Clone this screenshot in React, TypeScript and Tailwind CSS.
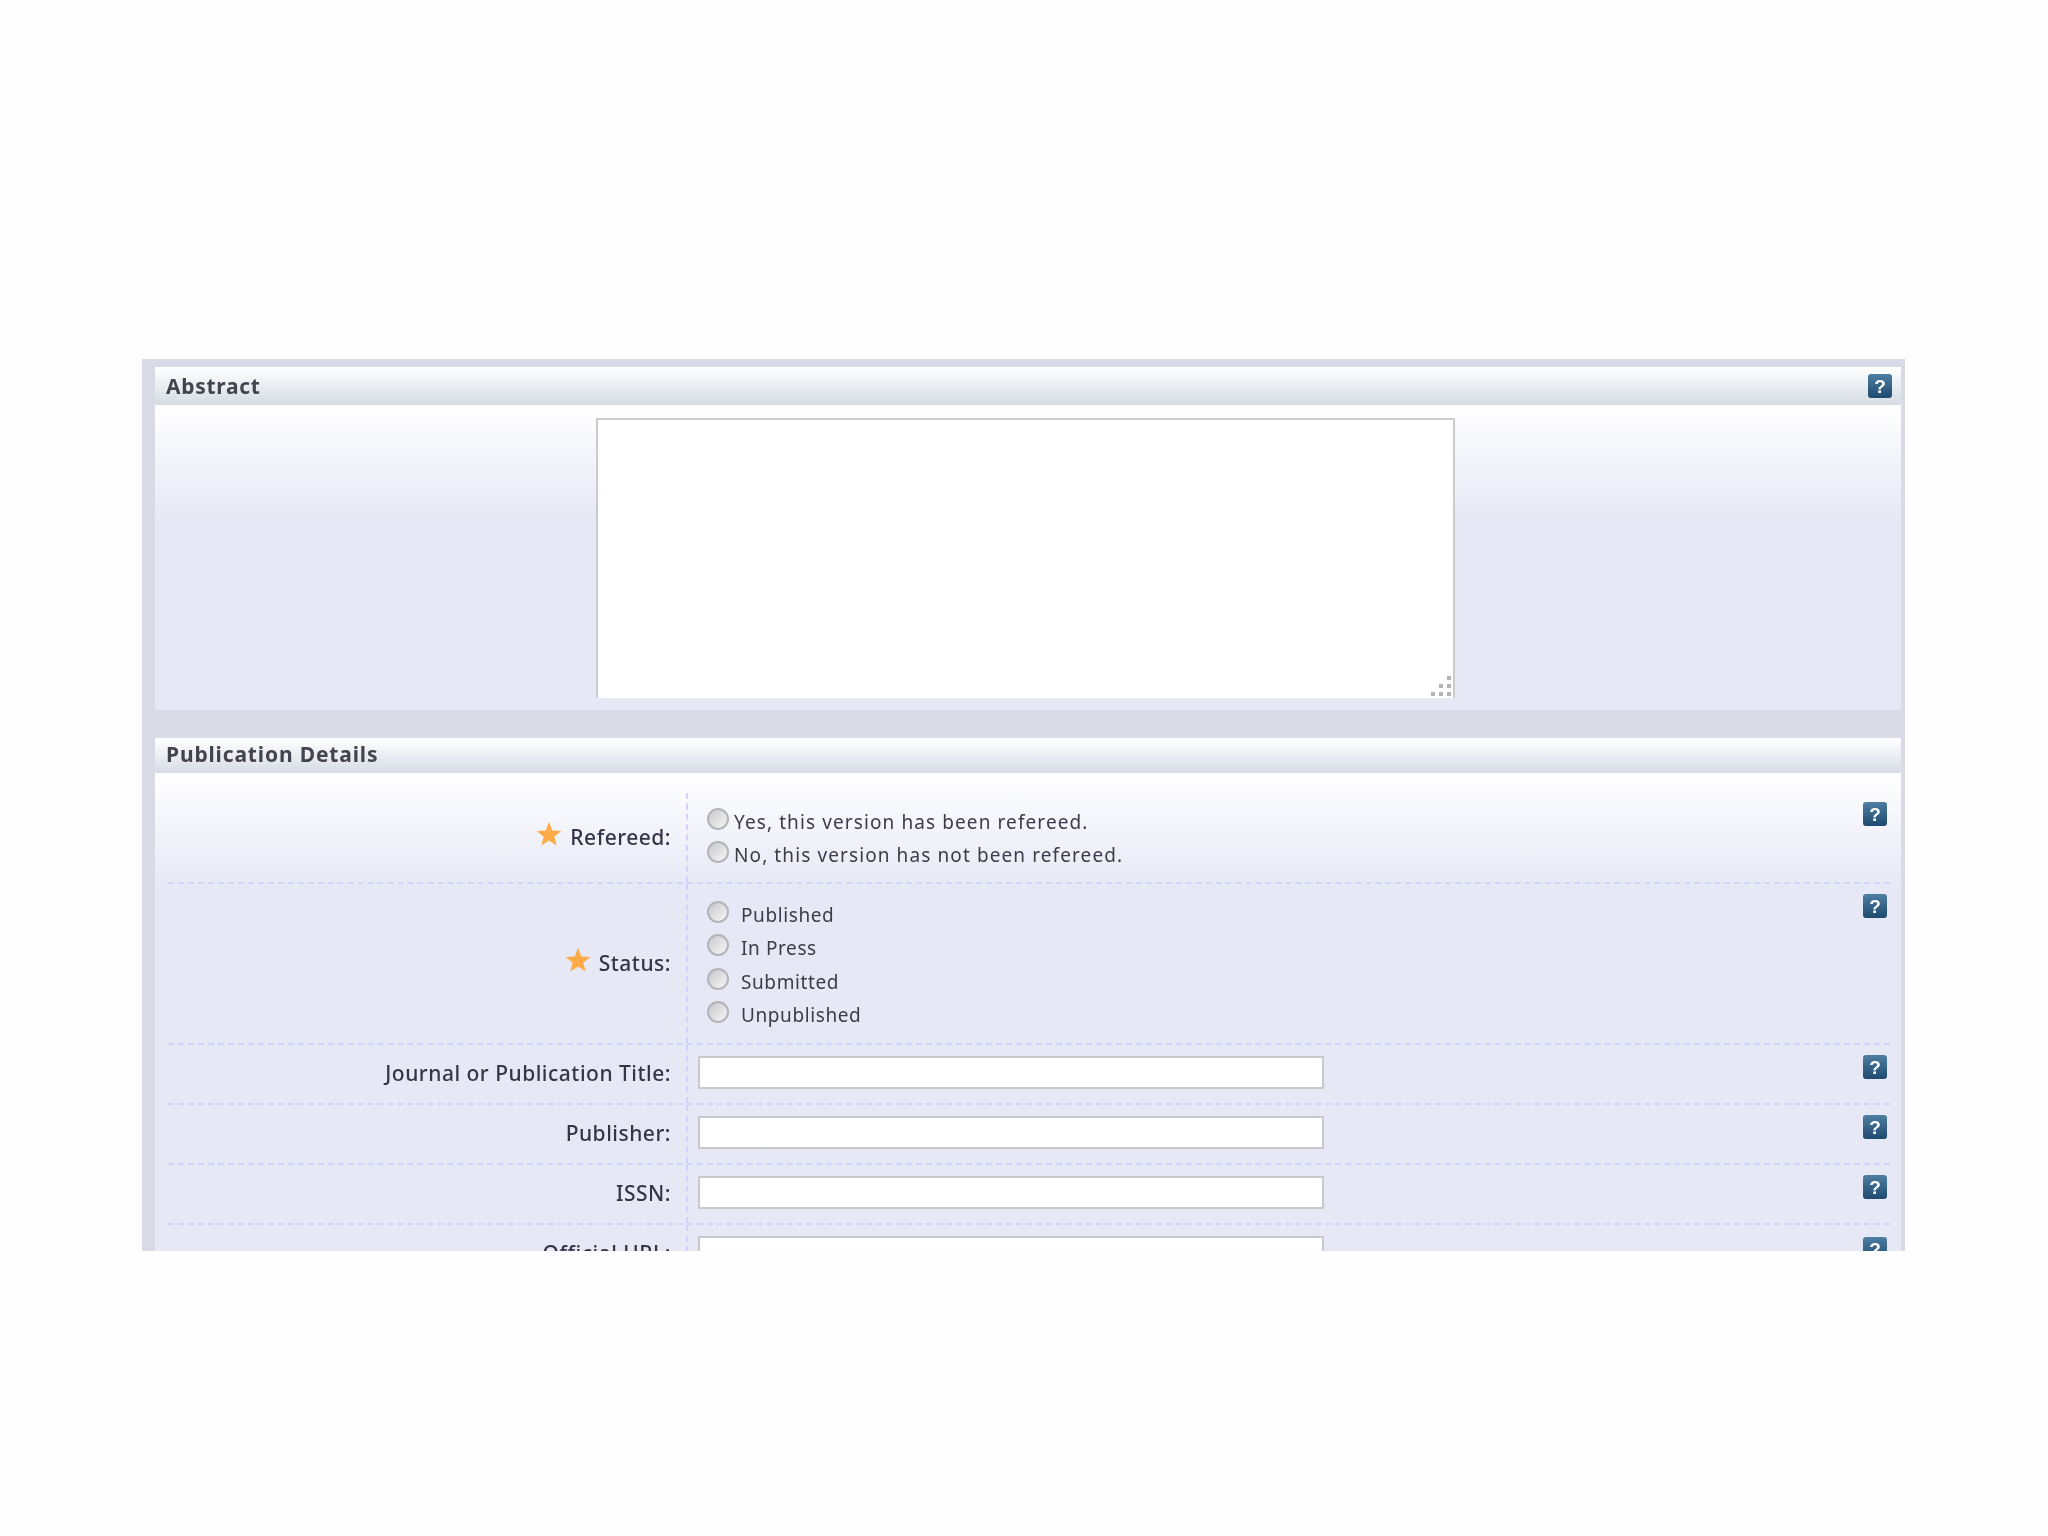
const font = "[font-family:'Noto_Sans',sans-serif]";

function Help({ className = "" }: { className?: string }) {
  return (
    <span className={`flex h-6 w-6 shrink-0 items-center justify-center rounded-[3px] bg-gradient-to-b from-[#4f7fa3] to-[#1f4a6f] text-[19px] leading-none font-bold text-white [font-family:'Liberation_Sans',sans-serif] ${className}`}>
      ?
    </span>
  );
}

function Star() {
  return (
    <svg width="26" height="26" viewBox="0 0 24 24" className="mb-[8px] mr-[8px] shrink-0">
      <path d="M12 0.8l3 7.900 8.400.5-6.500 5.300 2.200 8.200L12 18.100l-7.100 4.600 2.200-8.200-6.500-5.300 8.400-.5z" fill="#fcab48" />
    </svg>
  );
}

function Row({
  label,
  required,
  heightClass,
  helpClass = "mt-[10px]",
  children,
}: {
  label: string;
  required?: boolean;
  heightClass: string;
  helpClass?: string;
  children: React.ReactNode;
}) {
  return (
    <div className={`flex ${heightClass} border-b-2 border-dashed border-[#d2d2fb]`}>
      <div className="flex w-[518px] shrink-0 items-center justify-end pr-[15px] text-[21px] font-medium tracking-[0.5px] text-[#35354a]">
        {required && <Star />}
        <span>{label}</span>
      </div>
      <div className="flex min-w-0 flex-1 justify-between border-l-2 border-dashed border-[#d2d2fb] pr-[3px]">
        <div className="min-w-0 flex-1">{children}</div>
        <Help className={helpClass} />
      </div>
    </div>
  );
}

function Radio() {
  return (
    <input
      type="radio"
      name="r"
      className="h-[22px] w-[22px] shrink-0 appearance-none rounded-full border-2 border-[#b4b4b8] bg-gradient-to-br from-[#c8c8cc] to-[#f8f8fa]"
    />
  );
}

function TextField() {
  return (
    <div className="mt-[11px] pl-[10px]">
      <input
        type="text"
        className="block h-[33px] w-[626px] border-2 border-[#c9c9cb] bg-white"
      />
    </div>
  );
}

function Grip() {
  const dots = [
    "col-start-3 row-start-1",
    "col-start-2 row-start-2",
    "col-start-3 row-start-2",
    "col-start-1 row-start-3",
    "col-start-2 row-start-3",
    "col-start-3 row-start-3",
  ];
  return (
    <div className="absolute right-[4px] bottom-[2px] grid grid-cols-[4px_4px_4px] grid-rows-[4px_4px_4px] gap-[4px]">
      {dots.map((d) => (
        <span key={d} className={`${d} bg-[#b4b4b8]`} />
      ))}
    </div>
  );
}

export default function App() {
  return (
    <div className={`min-h-[1536px] bg-[#fefefe] pt-[359px] pl-[142px] ${font}`}>
      <div className="h-[892px] w-[1763px] overflow-hidden bg-[#d8dae6] pt-2 pr-1 pl-[13px] blur-[0.5px]">
        <div className="flex h-[38px] items-center justify-between bg-gradient-to-b from-white to-[#d5dce3] pr-[9px] pl-[11px]">
          <h2 className="translate-y-[1px] text-[21px] font-bold tracking-[0.7px] text-[#44444e]">Abstract</h2>
          <Help />
        </div>
        <div className="h-[305px] bg-gradient-to-b from-white to-[#e6e8f5] to-[38%] pt-[13px] pl-[441px]">
          <div className="relative h-[280px] w-[859px]">
            <textarea className="block h-full w-full resize-none border-2 border-b-0 border-[#cbcbcd] bg-white" />
            <Grip />
          </div>
        </div>

        <div className="mt-[28px] flex h-[35px] items-center bg-gradient-to-b from-white to-[#d7dce6] pl-[11px]">
          <h2 className="-translate-y-[1px] text-[21px] font-bold tracking-[0.85px] text-[#44444e]">Publication Details</h2>
        </div>
        <div className="h-[500px] bg-gradient-to-b from-white to-[#e6e8f5] to-[23%] pt-[20px] pr-[11px] pl-[13px]">
          <Row label="Refereed:" required heightClass="h-[91px]" helpClass="mt-[9px]">
            <div className="flex flex-col pt-[15px] pl-[19px] text-[19px] tracking-[1.1px] text-[#3b3b4a]">
              <label className="flex h-[33px] items-start gap-[5px]">
                <Radio />
                <span>Yes, this version has been refereed.</span>
              </label>
              <label className="flex h-[33px] items-start gap-[5px]">
                <Radio />
                <span>No, this version has not been refereed.</span>
              </label>
            </div>
          </Row>
          <Row label="Status:" required heightClass="h-[161px]">
            <div className="flex flex-col pt-[17px] pl-[19px] text-[19px] tracking-[0.6px] text-[#3b3b4a]">
              {["Published", "In Press", "Submitted", "Unpublished"].map((s) => (
                <label key={s} className="flex h-[33.4px] items-start gap-[12px]">
                  <Radio />
                  <span>{s}</span>
                </label>
              ))}
            </div>
          </Row>
          <Row label="Journal or Publication Title:" heightClass="h-[60px]">
            <TextField />
          </Row>
          <Row label="Publisher:" heightClass="h-[60px]">
            <TextField />
          </Row>
          <Row label="ISSN:" heightClass="h-[60px]">
            <TextField />
          </Row>
          <Row label="Official URL:" heightClass="h-[60px]" helpClass="mt-[12px]">
            <TextField />
          </Row>
        </div>
      </div>
    </div>
  );
}
